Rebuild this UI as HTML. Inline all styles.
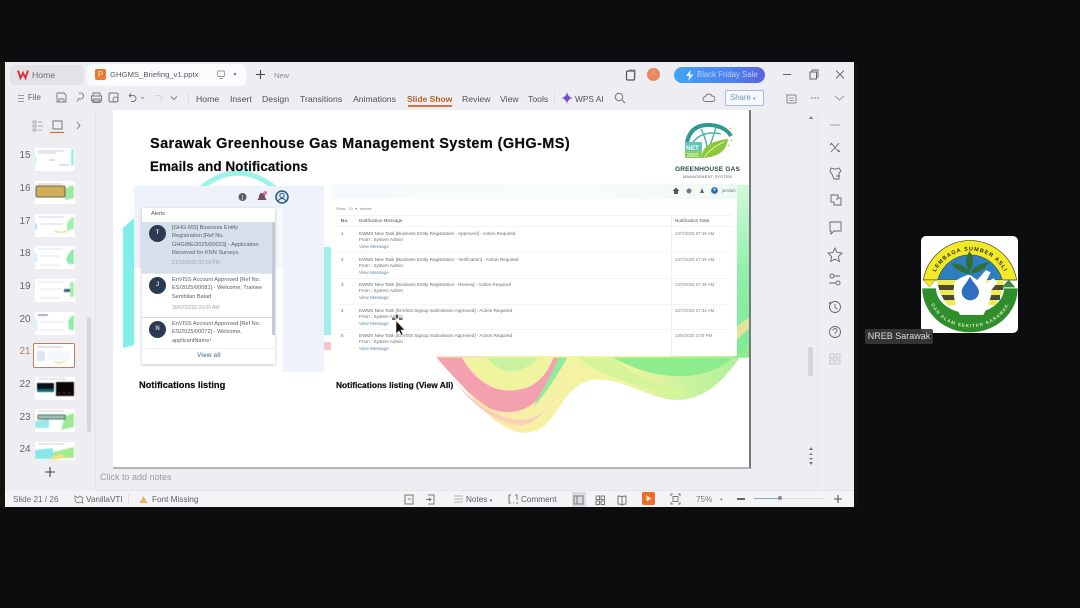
<!DOCTYPE html>
<html><head><meta charset="utf-8">
<style>
html,body{margin:0;padding:0;width:1080px;height:608px;overflow:hidden;background:#0d0d0f}
*{box-sizing:border-box}
body{font-family:"Liberation Sans",sans-serif;position:relative}
#w{position:absolute;left:0;top:0;width:1080px;height:608px;filter:blur(.3px)}
.a{position:absolute;white-space:nowrap}
.t{color:#4f4f55;font-size:8.700px}
.n{font-size:10px;color:#666;width:14px;text-align:center;left:18px}
.th{position:absolute;left:35px;width:40px;height:23px;background:#fff;overflow:hidden}
.th svg{filter:blur(.5px)}
.m{font-size:4.600px;color:#666b74;filter:blur(.2px);line-height:6.300px}
.d{font-size:4.400px;color:#80848a;filter:blur(.2px)}
.al{font-size:5.600px;line-height:8.400px;color:#5c5c62}
.av{position:absolute;left:149px;width:17px;height:17px;border-radius:50%;background:#2b3a50;color:#cdd3dd;font-size:6px;text-align:center;line-height:17px;font-weight:bold}
svg{position:absolute}
</style></head><body><div id="w">

<div class="a" style="left:5px;top:62px;width:849px;height:445px;background:#eeeef2"></div>
<div class="a" style="left:0;top:62px;width:5px;height:445px;background:#16120f"></div>
<div class="a" style="left:854px;top:62px;width:3px;height:445px;background:#15110e"></div>

<!-- tabs -->
<div class="a" style="left:10px;top:65px;width:74px;height:20px;background:#e2e2e8;border-radius:4px"></div>
<svg style="left:17px;top:69px" width="12" height="11"><path d="M1 1.500L3.500 9 6 4 8.500 9 11 1.500" fill="none" stroke="#d8383e" stroke-width="2"/></svg>
<div class="a t" style="left:32px;top:70px;color:#6a6a70">Home</div>
<div class="a" style="left:87px;top:64px;width:159px;height:22px;background:#fbfbfd;border-radius:5px"></div>
<div class="a" style="left:95px;top:69px;width:11px;height:11px;background:#e8792e;border-radius:2px;color:#fbe2cf;font-size:8px;text-align:center;line-height:11px">P</div>
<div class="a t" style="left:110px;top:70px;color:#5a5a60;font-size:7.700px;line-height:10px">GHGMS_Briefing_v1.pptx</div>
<svg style="left:216px;top:70px" width="24" height="10"><rect x="1.500" y="1" width="7" height="5.500" rx="1" fill="none" stroke="#99a" stroke-width=".9"/><path d="M3.500 8.500h3" stroke="#99a"/><circle cx="19" cy="4" r="1.300" fill="#888"/></svg>
<svg style="left:255px;top:69px" width="11" height="11"><path d="M5.500 1v9M1 5.500h9" stroke="#444" stroke-width="1.100"/></svg>
<div class="a t" style="left:274px;top:71px;font-size:7.500px;color:#8a8a90">New</div>

<!-- top right -->
<svg style="left:625px;top:69px" width="12" height="12"><rect x="1.500" y="2" width="8" height="9" rx="1" fill="none" stroke="#555" stroke-width="1.200"/><path d="M4 1h6v8" fill="none" stroke="#777" stroke-width=".8"/></svg>
<div class="a" style="left:647px;top:68px;width:13px;height:13px;border-radius:50%;background:#e8875c;color:#eea888;font-size:6px;text-align:center;line-height:13px">N</div>
<div class="a" style="left:674px;top:67px;width:91px;height:16px;border-radius:8px;background:linear-gradient(90deg,#3fa5f5,#4f7cf0 70%,#5c62dd);color:#bcd2f6;font-size:7.800px;line-height:16px;padding-left:23px">Black Friday Sale</div>
<svg style="left:685px;top:69.500px" width="9" height="11"><path d="M5.500 0L1 6H4.200L3 11 8.500 4.500H5.200z" fill="#e8f2ff"/></svg>
<svg style="left:781px;top:68px" width="68" height="14"><path d="M2 6.500h8" stroke="#666" stroke-width="1"/><rect x="29" y="4" width="6.500" height="7" fill="none" stroke="#666"/><path d="M31 4V2h6v7h-1.500" fill="none" stroke="#666" stroke-width=".9"/><path d="M55 2.500l8 8M63 2.500l-8 8" stroke="#666" stroke-width=".9"/></svg>

<!-- menu -->
<svg style="left:17px;top:94px" width="10" height="10"><path d="M1 1.500h6M1 4.500h6M1 7.500h6" stroke="#999" stroke-width=".9"/></svg>
<div class="a t" style="left:28px;top:93px;font-size:8px;color:#5c5c62">File</div>
<svg style="left:55px;top:91px" width="125" height="14"><path d="M2 2h7l2 2v7H2zM4 11V8h5v3" fill="none" stroke="#777" stroke-width=".9"/><path d="M24 2.500a3 3 0 1 1 0 5l-2 3" fill="none" stroke="#777" stroke-width=".9"/><path d="M38 5V2h7v3M36.500 5h10v5h-10zM38 8h7v3.500h-7z" fill="none" stroke="#777" stroke-width=".9"/><rect x="54" y="2" width="9" height="9" rx="1.500" fill="none" stroke="#777"/><circle cx="60.500" cy="8.500" r="2.500" fill="#eee" stroke="#777"/><path d="M74 4.500h4a2.500 2.500 0 0 1 0 6h-2M74 4.500l2-2M74 4.500l2 2" fill="none" stroke="#777"/><path d="M86 6l1.500 1.500L89 6" fill="none" stroke="#888" stroke-width=".8"/><path d="M100 4.500h4a2.500 2.500 0 0 1 0 6" fill="none" stroke="#d2d2d6"/><path d="M116 5.500l3 3 3-3" fill="none" stroke="#888"/></svg>
<div class="a" style="left:188px;top:92px;width:1px;height:12px;background:#e0e0e4"></div>
<div class="a t" style="left:196px;top:93.500px">Home</div>
<div class="a t" style="left:230px;top:93.500px">Insert</div>
<div class="a t" style="left:262px;top:93.500px">Design</div>
<div class="a t" style="left:300px;top:93.500px">Transitions</div>
<div class="a t" style="left:353px;top:93.500px">Animations</div>
<div class="a t" style="left:407px;top:93.500px;color:#b8602a;font-weight:bold;font-size:8.500px">Slide Show</div>
<div class="a" style="left:408px;top:105px;width:44px;height:1.500px;background:#c87a44"></div>
<div class="a t" style="left:462px;top:93.500px">Review</div>
<div class="a t" style="left:500px;top:93.500px">View</div>
<div class="a t" style="left:528px;top:93.500px">Tools</div>
<div class="a" style="left:554px;top:92px;width:1px;height:12px;background:#e0e0e4"></div>
<svg style="left:561px;top:91px" width="12" height="14"><path d="M6 1Q6.800 6 11.500 7 6.800 8 6 13 5.200 8 .500 7 5.200 6 6 1z" fill="#6d4fd0"/></svg>
<div class="a t" style="left:575px;top:93.500px;font-size:8.300px">WPS AI</div>
<svg style="left:614px;top:92px" width="12" height="12"><circle cx="5" cy="5" r="3.700" fill="none" stroke="#777" stroke-width="1"/><path d="M8 8l3 3" stroke="#777" stroke-width="1"/></svg>
<svg style="left:702px;top:92px" width="13" height="12"><path d="M3.500 9.500a2.500 2.500 0 0 1 0-5 3.500 3.500 0 0 1 6.500-.500 2.700 2.700 0 0 1 .500 5.500z" fill="none" stroke="#777"/></svg>
<div class="a" style="left:725px;top:90px;width:39px;height:16px;border:1px solid #9fc0d8;border-radius:2px;background:#f7f8fb;color:#6b99bb;font-size:7.800px;line-height:14px;padding-left:4px">Share <span style="font-size:5px">▾</span></div>
<svg style="left:785px;top:92px" width="60" height="13"><rect x="2" y="3" width="9" height="8" rx="1" fill="none" stroke="#888"/><path d="M1 3h4M4 6h5M4 8.500h5" stroke="#888" stroke-width=".8"/><circle cx="27" cy="6" r=".7" fill="#666"/><circle cx="30" cy="6" r=".7" fill="#666"/><circle cx="33" cy="6" r=".7" fill="#666"/><path d="M50 4l4.500 4 4.500-4" fill="none" stroke="#999"/></svg>

<!-- panes -->
<div class="a" style="left:95px;top:110px;width:1px;height:380px;background:#e5e5ea"></div>
<div class="a" style="left:817px;top:110px;width:1px;height:380px;background:#e5e5ea"></div>
<div class="a" style="left:95px;top:490px;width:759px;height:1px;background:#e5e5ea"></div>
<div class="a" style="left:5px;top:491px;width:849px;height:16px;background:#f4f4f7"></div>

<!-- left pane top icons -->
<svg style="left:30px;top:118px" width="60" height="16"><path d="M3 3h3v2H3zM3 7h3v2H3zM3 11h3v2H3zM8 4h4M8 8h5M8 12h4" fill="none" stroke="#999" stroke-width=".8"/><rect x="23" y="3" width="9" height="8" fill="none" stroke="#777" stroke-width="1"/><path d="M20 14.500h14" stroke="#c86a3a" stroke-width="1.100"/><path d="M47 4l3 3.500-3 3.500" fill="none" stroke="#888"/></svg>

<!-- thumbnails -->
<div class="a n" style="top:150px">15</div>
<div class="th" style="top:148px"><svg width="40" height="23" style="left:0;top:0"><path d="M0 7q3 5 0 10zM36 1h3v16h-3z" fill="#a8ecdc"/><path d="M3 3h26M3 5h18" stroke="#99a" stroke-width=".6"/><path d="M14 12h6M24 17h10" stroke="#9ab" stroke-width=".7"/></svg></div>
<div class="a n" style="top:183px">16</div>
<div class="th" style="top:181px"><svg width="40" height="23" style="left:0;top:0"><path d="M30 9q5-6 9-4v12l-9 2z" fill="#9fe9a4"/><rect x="1" y="5" width="29" height="11" rx="1" fill="#d3ad5a" stroke="#56604c"/><path d="M3 3h24" stroke="#99a" stroke-width=".6"/></svg></div>
<div class="a n" style="top:216px">17</div>
<div class="th" style="top:214px"><svg width="40" height="23" style="left:0;top:0"><path d="M32 9q4-6 7-6v12l-7 2z" fill="#a5eeb0"/><path d="M0 9h2v7H0z" fill="#bdf"/><path d="M3 3h26M6 10h22" stroke="#9ab" stroke-width=".6" fill="none"/><path d="M20 17q6 3 12 0" stroke="#ded070" fill="none"/></svg></div>
<div class="a n" style="top:248px">18</div>
<div class="th" style="top:246px"><svg width="40" height="23" style="left:0;top:0"><path d="M31 13q4-9 8-10v15h-6z" fill="#8eeaa8"/><path d="M0 7h2v9H0z" fill="#cef"/><path d="M3 3h26M5 10h20M5 19h18" stroke="#bcd" stroke-width=".6"/></svg></div>
<div class="a n" style="top:281px">19</div>
<div class="th" style="top:279px"><svg width="40" height="23" style="left:0;top:0"><path d="M35 3h4v15h-4z" fill="#a5eeb0"/><path d="M3 3h26M5 10h22M5 19h20" stroke="#bcd" stroke-width=".6"/><rect x="29" y="10" width="6" height="3" fill="#3a5a78"/></svg></div>
<div class="a n" style="top:314px">20</div>
<div class="th" style="top:312px"><svg width="40" height="23" style="left:0;top:0"><path d="M33 9q3-5 6-6v15h-5z" fill="#90eaa8"/><path d="M0 7h2v12H0z" fill="#cef"/><path d="M3 3h10" stroke="#667" stroke-width="1"/><path d="M5 10h25M5 18h25" stroke="#bcd" stroke-width=".6"/></svg></div>
<div class="a n" style="top:346px;color:#b87a55">21</div>
<div class="a" style="left:33px;top:343px;width:42px;height:25px;background:#fff;border:1.500px solid #b9805a;border-radius:2px"><svg width="38" height="21" style="left:1px;top:1px;filter:blur(.4px)"><path d="M2 2h26" stroke="#889" stroke-width=".6"/><rect x="2" y="6" width="8" height="10" fill="#dde6f0"/><rect x="13" y="6" width="22" height="9" fill="#f4f7f9"/><path d="M18 16q6 4 12 0" stroke="#e5d480" fill="none"/></svg></div>
<div class="a n" style="top:379px">22</div>
<div class="th" style="top:377px"><svg width="40" height="23" style="left:0;top:0"><rect x="2" y="6" width="17" height="9" fill="#06111a"/><path d="M2 12h17v3H2z" fill="#0a6a75"/><rect x="21" y="5" width="18" height="14" fill="#0a0606"/><path d="M23 16h14" stroke="#a33" stroke-dasharray="2 3"/><path d="M3 2h28" stroke="#99a" stroke-width=".6"/></svg></div>
<div class="a n" style="top:412px">23</div>
<div class="th" style="top:409px"><svg width="40" height="23" style="left:0;top:0"><path d="M30 7l9-3v14l-13 3z" fill="#9ee89a"/><path d="M0 12l14-2v9H0z" fill="#a0e6e6"/><rect x="3" y="6" width="27" height="4" fill="#9fc2b8" stroke="#4d6f66"/><path d="M3 2h26" stroke="#99a" stroke-width=".6"/></svg></div>
<div class="a n" style="top:444px">24</div>
<div class="th" style="top:442px;height:18px"><svg width="40" height="18" style="left:0;top:0"><path d="M0 8l18-2v11H0z" fill="#86e6ea"/><path d="M18 10l21-5v11H18z" fill="#a2ea90"/><path d="M16 15l10-3 6 4-16 2z" fill="#eee580"/><path d="M3 2h26" stroke="#99a" stroke-width=".6"/></svg></div>
<div class="a" style="left:87px;top:317px;width:4px;height:115px;background:#d6d6da;border-radius:2px"></div>
<svg style="left:44px;top:466px" width="12" height="12"><path d="M6 1v10M1 6h10" stroke="#444" stroke-width="1.100"/></svg>

<!-- slide -->
<div class="a" style="left:113px;top:110px;width:638px;height:359px;background:#fff;border-right:2px solid #77777c;border-bottom:2px solid #b6b6ba;overflow:hidden">
<svg style="left:0;top:0" width="638" height="359">
<defs>
<linearGradient id="g1" x1="0" y1="0" x2="1" y2="0"><stop offset="0" stop-color="#fbdcc0"/><stop offset=".3" stop-color="#f8efa6"/><stop offset=".6" stop-color="#f0f5a0"/><stop offset="1" stop-color="#a8f09c"/></linearGradient>
<linearGradient id="g2" x1="0" y1="0" x2="0" y2="1"><stop offset="0" stop-color="#d2f8dc"/><stop offset=".5" stop-color="#90f0aa"/><stop offset="1" stop-color="#78ec92"/></linearGradient>
</defs>
<path d="M88 78Q125 48 162 78" stroke="#9df3ea" stroke-width="5" fill="none"/>
<path d="M10 118L21 108V235L10 238Z" fill="#7fefe8"/>
<path d="M211 137h7v88h-7z" fill="#9ff0ea"/>
<path d="M211 232h7v8h-7z" fill="#f7c4cc"/>
<g transform="translate(217 70) scale(.33333)">
<path d="M310 520C380 590 440 680 500 725C560 770 620 770 660 720C700 670 720 610 790 600C860 590 930 640 1010 657C1090 670 1170 640 1262 480V520Z" fill="url(#g1)"/>
<path d="M370 600C430 680 500 730 570 735C620 735 660 680 690 620C660 690 620 720 570 720C500 715 430 670 370 600Z" fill="#f8d0b5"/>
<path d="M320 533C370 590 420 650 480 685C530 705 590 700 630 650C660 610 675 570 685 533H670C650 590 610 625 560 630C500 640 440 610 395 533Z" fill="#f5a0ae"/>
<path d="M400 533C440 600 500 635 560 625C610 620 650 590 670 533Z" fill="#eef59e"/>
<path d="M470 533C510 580 560 590 620 540V533Z" fill="#c8f2a0"/>
<path d="M685 533H712C680 590 640 650 610 680C640 620 670 580 685 533Z" fill="#8fec9c"/>
<path d="M740 533C820 590 900 610 1000 640L1080 640C1000 620 900 590 860 533Z" fill="#d6f49a"/>
<path d="M850 533C950 590 1080 610 1170 560C1200 545 1230 520 1262 470V533Z" fill="#8cec8e"/>
<path d="M1220 15H1262V480L1220 530Z" fill="url(#g2)"/>
<path d="M1220 440L1262 410V440L1220 480Z" fill="#e7e29a"/>
</g>
</svg>
<div class="a" style="left:37px;top:26px;font-size:14.500px;font-weight:bold;color:#0c0c0c;letter-spacing:.4px;-webkit-text-stroke:.2px #0c0c0c">Sarawak Greenhouse Gas Management System (GHG-MS)</div>
<div class="a" style="left:37px;top:49px;font-size:13.400px;font-weight:bold;color:#0c0c0c;letter-spacing:.1px;-webkit-text-stroke:.2px #0c0c0c">Emails and Notifications</div>
<div class="a" style="left:26px;top:270px;font-size:9.300px;font-weight:bold;color:#111;-webkit-text-stroke:.2px #111">Notifications listing</div>
<div class="a" style="left:223px;top:270px;font-size:8.400px;font-weight:bold;color:#111;-webkit-text-stroke:.2px #111">Notifications listing (View All)</div>
</div>

<!-- logo -->
<svg style="left:675px;top:120px" width="70" height="60">
<path d="M12 22Q16 4 35 5q15 1 21 11" fill="none" stroke="#2c9a90" stroke-width="4"/>
<path d="M18 22q10-12 28-8M26 9q6 12 6 20M41 7q-2 8-6 18" fill="none" stroke="#4bb2a8" stroke-width="1.400"/>
<rect x="10" y="22" width="17" height="16" fill="#8ecf60"/>
<rect x="10" y="22" width="17" height="9" fill="#66c4b8"/>
<text x="11" y="30" font-size="6.500" fill="#e8fff8" font-family="Liberation Sans,sans-serif" font-weight="bold">NET</text>
<text x="12" y="37" font-size="5" fill="#f4ffe0" font-family="Liberation Sans,sans-serif">2050</text>
<path d="M27 38q-1-16 26-19-2 18-26 19z" fill="#8cc83e"/>
<path d="M29 37q8-10 20-15" stroke="#d9ee9c" fill="none"/>
<path d="M55 8l1 1M57 14l1 1M56 20l1 1M53 25l1 1" stroke="#d8c84a" stroke-width="1.800"/>
</svg>
<div class="a" style="left:673px;top:166px;width:69px;text-align:center;font-size:6.600px;font-weight:bold;color:#2c4a50;letter-spacing:.15px">GREENHOUSE GAS</div>
<div class="a" style="left:673px;top:175px;width:69px;text-align:center;font-size:3.800px;color:#556;letter-spacing:.3px">MANAGEMENT SYSTEM</div>

<!-- left screenshot -->
<div class="a" style="left:134px;top:186px;width:149px;height:82px;background:#edf2fb"></div>
<div class="a" style="left:283px;top:186px;width:41px;height:186px;background:#edf2fb"></div>
<div class="a" style="left:275px;top:208px;width:8px;height:60px;background:#f8f9fc"></div>
<div class="a" style="left:142px;top:208px;width:133px;height:156px;background:#fff;box-shadow:0 1px 3px rgba(0,0,0,.25)"></div>
<div class="a" style="left:142px;top:222px;width:130px;height:51px;background:#d6e0ec"></div>
<div class="a" style="left:272px;top:222px;width:3px;height:113px;background:#c4cad5"></div>
<div class="a" style="left:142px;top:273px;width:130px;height:1px;background:#e8e8ea"></div>
<div class="a" style="left:142px;top:317px;width:130px;height:1px;background:#dcdce0"></div>
<div class="a" style="left:142px;top:348px;width:133px;height:1px;background:#f0f0f2"></div>
<div class="a" style="left:151px;top:211px;font-size:5.500px;color:#555">Alerts</div>
<div class="av" style="top:225px">T</div>
<div class="av" style="top:277px">J</div>
<div class="av" style="top:321px">N</div>
<div class="a al" style="left:172px;top:224px">[GHG-MS] Business Entity<br>Registration [Ref No.<br>GHG/BE/2025/00023] - Application<br>Received for KNN Surveys</div>
<div class="a al" style="left:172px;top:259px;color:#a0a4aa;font-size:5px">21/10/2025 02:19 PM</div>
<div class="a al" style="left:172px;top:276px">EnVISS Account Approved [Ref No.<br>ES/2025/00081] - Welcome, Trainee<br>Sembilan Balad</div>
<div class="a al" style="left:172px;top:304px;color:#a0a4aa;font-size:5px">30/07/2025 09:09 AM</div>
<div class="a al" style="left:172px;top:320px">EnVISS Account Approved [Ref No.<br>ES/2025/00072] - Welcome,<br>applicantName!</div>
<div class="a" style="left:197px;top:352px;font-size:6.500px;font-weight:bold;color:#6a90ad">View all</div>
<svg style="left:234px;top:188px" width="60" height="20"><circle cx="8.500" cy="9" r="4" fill="#5a6068"/><path d="M8.500 7v5" stroke="#bbb"/><path d="M28 5q-3 0-3 4l-1.500 3h9l-1.500-3q0-4-3-4z" fill="#7a4a60"/><circle cx="31" cy="5" r="2" fill="#e87a9a"/><circle cx="48" cy="9" r="6" fill="#dfe8f2" stroke="#2b5a7d" stroke-width="1.500"/><circle cx="48" cy="7.500" r="2.200" fill="none" stroke="#2b5a7d"/><path d="M44 13q4-5 8 0" fill="none" stroke="#2b5a7d"/></svg>

<!-- right screenshot -->
<div class="a" style="left:332px;top:184px;width:405px;height:172px;background:#fff"></div>
<div class="a" style="left:332px;top:184px;width:405px;height:15px;background:linear-gradient(90deg,#f6fafa,#f9fcfb 60%,#eff9f3)"></div>
<svg style="left:670px;top:185px" width="50" height="12"><path d="M6 2.500L2.500 6H4v3h4V6h1.500z" fill="#556"/><circle cx="19" cy="6" r="2.500" fill="#778"/><path d="M32 3l-2 5h4z" fill="#667"/><circle cx="44.500" cy="5.500" r="3.400" fill="#2f6fa8"/><circle cx="44.500" cy="4.500" r="1.100" fill="#dde"/></svg>
<div class="a" style="left:722px;top:188px;font-size:4.300px;color:#778">jamilah</div>
<div class="a d" style="left:336px;top:206px;font-size:3.800px">Show &nbsp;&nbsp;10 &nbsp;▾&nbsp;&nbsp; entries</div>
<div class="a" style="left:336px;top:215px;width:396px;height:1px;background:#f2f3f5"></div>
<div class="a" style="left:336px;top:226px;width:396px;height:1px;background:#f2f3f5"></div>
<div class="a" style="left:336px;top:252px;width:396px;height:1px;background:#f4f5f7"></div>
<div class="a" style="left:336px;top:278px;width:396px;height:1px;background:#f4f5f7"></div>
<div class="a" style="left:336px;top:304px;width:396px;height:1px;background:#f4f5f7"></div>
<div class="a" style="left:336px;top:329px;width:396px;height:1px;background:#f4f5f7"></div>
<div class="a" style="left:671px;top:215px;width:1px;height:140px;background:#f0f1f3"></div>
<div class="a" style="left:341px;top:218px;font-size:4.600px;font-weight:bold;color:#667">No.</div>
<div class="a" style="left:359px;top:218px;font-size:4.700px;color:#555">Notification Message</div>
<div class="a" style="left:675px;top:218px;font-size:4.700px;color:#555">Notification Date</div>

<div class="a m" style="left:341px;top:231px">1</div>
<div class="a m" style="left:359px;top:231px">EWMS New Task [Business Entity Registration - Approved] - Action Required<br>From : System Admin<br><span style="color:#5d87a8">View Message</span></div>
<div class="a d" style="left:675px;top:231px">10/7/2025 07:49 AM</div>
<div class="a m" style="left:341px;top:257px">2</div>
<div class="a m" style="left:359px;top:257px">EWMS New Task [Business Entity Registration - Verification] - Action Required<br>From : System Admin<br><span style="color:#5d87a8">View Message</span></div>
<div class="a d" style="left:675px;top:257px">10/7/2025 07:49 AM</div>
<div class="a m" style="left:341px;top:282px">3</div>
<div class="a m" style="left:359px;top:282px">EWMS New Task [Business Entity Registration - Review] - Action Required<br>From : System Admin<br><span style="color:#5d87a8">View Message</span></div>
<div class="a d" style="left:675px;top:282px">10/7/2025 07:49 AM</div>
<div class="a m" style="left:341px;top:308px">4</div>
<div class="a m" style="left:359px;top:308px">EWMS New Task [EnVISS Signup Submission Approved] - Action Required<br>From : System Admin<br><span style="color:#5d87a8">View Message</span></div>
<div class="a d" style="left:675px;top:308px">10/7/2025 07:34 AM</div>
<div class="a m" style="left:341px;top:333px">5</div>
<div class="a m" style="left:359px;top:333px">EWMS New Task [EnVISS Signup Submission Approved] - Action Required<br>From : System Admin<br><span style="color:#5d87a8">View Message</span></div>
<div class="a d" style="left:675px;top:333px">10/6/2025 3:00 PM</div>

<!-- cursor -->
<svg style="left:390px;top:314px" width="18" height="22"><path d="M6 6.500V20l3-3 2.500 4.500 1.500-1-2-4.500h4z" fill="#111" stroke="#fff" stroke-width=".6"/><path d="M7 .500v4M2 5h3.500M9 5h3.500" stroke="#111" stroke-width="1.300"/></svg>

<!-- slide scroll -->
<div class="a" style="left:808px;top:347px;width:5px;height:29px;background:#d6d6da;border-radius:2px"></div>
<svg style="left:806px;top:114px" width="10" height="8"><path d="M5 2l2 3H3z" fill="#777"/></svg>
<svg style="left:806px;top:446px" width="10" height="20"><path d="M5 1l2 3H3zM3 9l2-2 2 2M3 12l2 2 2-2M5 19l2-3H3z" fill="#777"/></svg>

<!-- right rail -->
<svg style="left:825px;top:118px" width="20" height="248" fill="none" stroke="#666" stroke-width=".9">
<path d="M5 7h10" stroke="#999"/>
<path d="M6 25l8 9M14 25l-8 9M5 27l2-2M13 32l2 2"/>
<path d="M6 50l3 1h2l3-1 2 3-2 2v6H9l-2-5-2-2zM11 58h4"/>
<path d="M6 77h7v3h3v7H9v-3H6zM6 84h3M12 80v2"/>
<path d="M5 104h11v9H9l-3 3v-3H5z"/>
<path d="M10 130l2 4.500 5 .6-3.600 3.400 1 5-4.400-2.500-4.400 2.500 1-5-3.600-3.400 5-.6z"/>
<circle cx="7" cy="158" r="2"/><circle cx="13" cy="165" r="2"/><path d="M9 158h6M4 165h7"/>
<circle cx="10" cy="189" r="5.500"/><path d="M10 186v3.500l2.500 1.500M4 186l2-2"/>
<circle cx="10" cy="214" r="5.500"/><path d="M8 212.500a2 2 0 1 1 2.500 2l-.5 1.200M10 217.500v.5"/>
<g stroke="#c2c2c6"><rect x="5" y="236" width="4" height="4"/><rect x="11" y="236" width="4" height="4"/><rect x="5" y="242" width="4" height="4"/><rect x="11" y="242" width="4" height="4"/></g>
</svg>

<!-- notes -->
<div class="a" style="left:100px;top:472px;font-size:9px;color:#9c9ca0">Click to add notes</div>

<!-- status -->
<div class="a t" style="left:13px;top:495px;font-size:8.200px;color:#6a6a70">Slide 21 / 26</div>
<svg style="left:73px;top:494px" width="12" height="11" fill="none" stroke="#777"><path d="M2 2l3 2 2-2 3 2-1 2 1 3-3-1-2 1-2-1-1-3z" stroke-width=".8"/></svg>
<div class="a t" style="left:86px;top:495px;font-size:8.200px;color:#5c5c62">VanillaVTI</div>
<div class="a" style="left:128px;top:494px;width:1px;height:10px;background:#eadede"></div>
<svg style="left:139px;top:495px" width="9" height="9"><path d="M4.500 1L8.500 8H.500z" fill="#e9b65a"/></svg>
<div class="a t" style="left:152px;top:495px;font-size:8.200px;color:#5c5c62">Font Missing</div>
<svg style="left:403px;top:493px" width="34" height="13" fill="none" stroke="#777"><rect x="2" y="2" width="8" height="9"/><path d="M5 6h3"/><path d="M25 2h6v9h-6M23 6.500h5M26 5l2 1.500L26 8"/></svg>
<svg style="left:453px;top:494px" width="11" height="10"><path d="M1 2h9M1 5h9M1 8h9" stroke="#999" stroke-width=".8"/></svg>
<div class="a t" style="left:466px;top:495px;font-size:8.200px;color:#5c5c62">Notes <span style="font-size:5px">▾</span></div>
<svg style="left:507px;top:493px" width="12" height="12" fill="none" stroke="#777"><path d="M4 2H2v8h2M8 2h2v5M6 10h1M9 10h2"/></svg>
<div class="a t" style="left:521px;top:495px;font-size:8.200px;color:#5c5c62">Comment</div>
<div class="a" style="left:572px;top:492px;width:14px;height:15px;background:#dcdce0"></div>
<svg style="left:573px;top:494px" width="62" height="12" fill="none" stroke="#777"><rect x="1" y="2" width="9" height="8"/><path d="M4 2v8"/><rect x="23" y="2" width="3.500" height="3.500"/><rect x="28" y="2" width="3.500" height="3.500"/><rect x="23" y="7" width="3.500" height="3.500"/><rect x="28" y="7" width="3.500" height="3.500"/><path d="M45 2q3 0 4 1 1-1 4-1v8q-3 0-4 1-1-1-4-1zM49 3v8"/></svg>
<div class="a" style="left:642px;top:492px;width:13px;height:13px;background:#e8702c;border-radius:2px"></div>
<svg style="left:642px;top:492px" width="13" height="13"><path d="M4.500 3.500L9.500 6.500 4.500 9.500z" fill="#ffe9b8"/></svg>
<svg style="left:670px;top:493px" width="11" height="12" fill="none" stroke="#777"><path d="M1 3V1h2M8 1h2v2M10 9v2H8M3 11H1V9"/><rect x="3" y="3.500" width="5" height="5"/></svg>
<div class="a t" style="left:696px;top:495px;font-size:8.200px;color:#777">75%</div>
<div class="a t" style="left:720px;top:497px;font-size:5px;color:#888">▾</div>
<div class="a" style="left:737px;top:498px;width:8px;height:1.500px;background:#666"></div>
<div class="a" style="left:754px;top:498px;width:70px;height:1px;background:#dedee2"></div>
<div class="a" style="left:754px;top:498px;width:25px;height:1px;background:#8ab"></div>
<div class="a" style="left:778px;top:496px;width:4px;height:4px;border-radius:50%;background:#888"></div>
<svg style="left:833px;top:494px" width="10" height="10"><path d="M5 1v8M1 5h8" stroke="#555" stroke-width="1.100"/></svg>

<!-- zoom tile -->
<div class="a" style="left:921px;top:236px;width:97px;height:97px;background:#fff;border-radius:5px;overflow:hidden">
<svg width="97" height="97" style="left:0;top:0">
<defs><path id="arcTop" d="M222 152A115 115 0 0 1 438 152"/><path id="arcBot" d="M205 200A125 107 0 0 0 455 200"/></defs>
<g transform="scale(.33333) translate(-183 -33)">
<path d="M190 165A142 142 0 0 1 470 165Z" fill="#f2e928" stroke="#3a3a18" stroke-width="2"/>
<path d="M233 165A100 100 0 0 1 427 165Z" fill="#2f7fc0" stroke="#3a3a18" stroke-width="1.500"/>
<path d="M232 165H430V180H234zM238 195H424V210H244zM252 225H410V240H262z" fill="#f0ea4e"/>
<path d="M234 180H430V195H238zM244 210H420V225H252z" fill="#4a4a30"/>
<path d="M187 190A143 132 0 0 0 473 190H432A102 75 0 0 1 228 190Z" fill="#2f8e2c"/>
<path d="M190 165H226L208 186Z" fill="#f2e928" stroke="#3a3a18"/>
<path d="M425 187L446 164 466 187Z" fill="#3d8a3d"/>
<path d="M300 270C285 240 275 200 285 170C295 160 310 155 322 150L330 150L352 165L378 135L392 142L375 175L400 160L413 172L390 200L395 205L385 240L370 270Z" fill="#fff"/>
<path d="M330 155C318 177 305 187 305 200A26 26 0 0 0 357 200C357 187 342 177 330 155Z" fill="#2f6fc0"/>
<path d="M330 145C320 125 300 115 275 115C285 135 310 145 330 145ZM330 145C340 125 360 115 385 112C375 135 350 145 330 145ZM328 140C310 115 320 95 328 78C340 95 345 115 328 140Z" fill="#2f6f2f"/>
<text font-size="16.500" font-weight="bold" fill="#2a2a14" font-family="Liberation Sans,sans-serif"><textPath href="#arcTop" startOffset="50%" text-anchor="middle" letter-spacing="3">LEMBAGA SUMBER ASLI</textPath></text>
<text font-size="14" font-weight="bold" fill="#d6e0b8" font-family="Liberation Sans,sans-serif"><textPath href="#arcBot" startOffset="50%" text-anchor="middle" letter-spacing="3">DAN ALAM SEKITAR SARAWAK</textPath></text>
</g>
</svg>
</div>
<div class="a" style="left:865px;top:329px;width:68px;height:15px;background:rgba(55,55,57,.92);border-radius:2px;color:#dcdcde;font-size:9px;line-height:15px;text-align:center">NREB Sarawak</div>

</div></body></html>
